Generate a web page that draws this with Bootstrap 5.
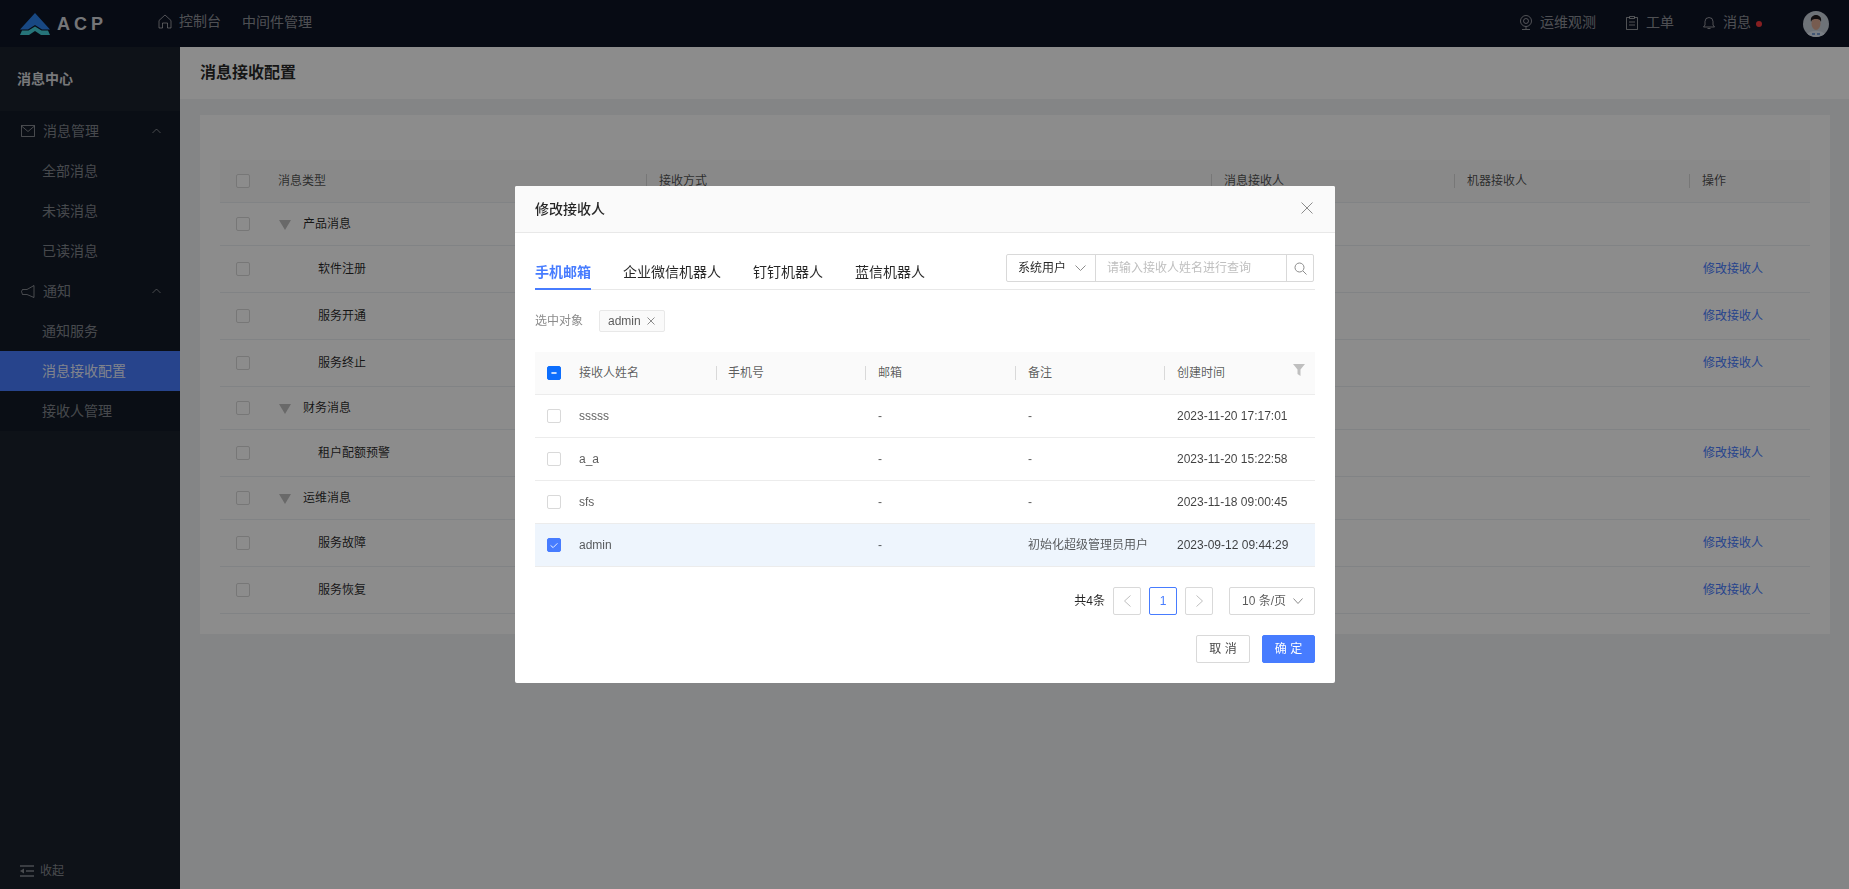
<!DOCTYPE html>
<html lang="en">
<head>
  <meta charset="UTF-8">
  <title>消息接收配置</title>
  <link href="https://cdn.jsdelivr.net/npm/bootstrap@5.3.0/dist/css/bootstrap.min.css" rel="stylesheet">
  <style>
    body {
        font-family: "Liberation Sans", "Noto Sans CJK SC", sans-serif;
        font-size: 12px;
        color: rgba(0, 0, 0, .85);
        background: #f0f2f5;
        height: 889px;
        overflow: hidden;
    }

    .top-bar {
        height: 47px;
        background: #0e1425;
        color: rgba(255, 255, 255, .55);
        font-size: 14px;
        padding: 0 20px;
    }

    .brand-name {
        font-size: 18px;
        font-weight: 700;
        letter-spacing: 4px;
        color: #d4d6da;
        margin-left: 7px;
        line-height: 1;
    }

    .top-links { margin-left: 51px; gap: 21px; margin-bottom: 2px; }
    .top-item { gap: 7px; margin-bottom: 2px; }
    .top-right .top-item { gap: 8px; }
    .top-item svg, .side-head svg { stroke: currentColor; fill: none; }

    .msg-dot {
        width: 6px;
        height: 6px;
        background: #f5393d;
        border-radius: 50%;
        margin-left: 5px;
    }

    .user-pic {
        width: 26px;
        height: 26px;
        border-radius: 50%;
        overflow: hidden;
        margin-left: 41px;
    }

    .side-bar {
        flex: 0 0 180px;
        height: 842px;
        background: #1a212d;
        color: rgba(255, 255, 255, .48);
        font-size: 14px;
    }

    .side-title {
        height: 64px;
        padding-left: 17px;
        color: rgba(255, 255, 255, .85);
        font-weight: 700;
    }

    .side-menu { background: #131a27; }
    .side-row { height: 40px; display: flex; align-items: center; white-space: nowrap; }
    .side-head { padding: 0 19px 0 21px; gap: 8px; }
    .side-sub { padding-left: 42px; }
    .side-sub.is-on { background: #477cff; color: rgba(255, 255, 255, .9); }

    .side-fold {
        height: 40px;
        padding-left: 20px;
        padding-top: 3px;
        gap: 6px;
        font-size: 12px;
    }

    .page-title {
        height: 52px;
        background: #fff;
        padding-left: 20px;
        font-size: 16px;
        font-weight: 700;
    }

    .page-body { padding: 16px 19px 0 20px; }
    .back-card { background: #fff; padding: 45px 20px 20px; }

    .back-table { margin: 0; table-layout: fixed; width: 100%; }
    .table.back-table > * > * > * {
        padding: 0;
        font-weight: 400;
        vertical-align: middle;
        border-bottom: 1px solid #ebeef2;
        background: transparent;
        color: rgba(0, 0, 0, .85);
    }
    .table.back-table thead th { height: 42px; background: #fafafa; position: relative; color: rgba(0, 0, 0, .7); }
    .back-table .group-row td { height: 43px; }
    .back-table .child-row td { height: 47px; }
    .table.back-table .fix-check { padding-left: 16px; }
    .table.back-table th.head-split { padding-left: 13px; }
    .table.back-table td.op-link { color: #477cff; padding-left: 14px; }
    .child-text { padding-left: 40px; }

    .arrow-down {
        display: inline-block;
        width: 0;
        height: 0;
        border-left: 6px solid transparent;
        border-right: 6px solid transparent;
        border-top: 10px solid #bfbfbf;
        margin: 0 12px 0 1px;
        vertical-align: -2px;
    }

    .head-split::before {
        content: "";
        position: absolute;
        left: 0;
        top: 14px;
        height: 14px;
        width: 1px;
        background: #d9d9d9;
    }

    .modal-backdrop.show { opacity: .45; }
    .dialog-wrap { max-width: 820px; margin: 186px auto 0 515px; }
    .dialog-box { border: 0; border-radius: 2px; font-size: 12px; }
    .dialog-head {
        height: 47px;
        padding: 0 20px;
        background: #fafafa;
        border-bottom: 1px solid #e8e8e8;
        border-radius: 2px 2px 0 0;
        font-size: 14px;
        font-weight: 500;
    }
    .dialog-close { margin: 0 2px 2px 0; }
    .dialog-body { padding: 20px; height: 450px; }

    .tab-row { height: 36px; border-bottom: 1px solid #e8e8e8; position: relative; margin-top: 1px; }
    .tab-link {
        font-size: 14px;
        height: 36px;
        line-height: 36px;
        margin-right: 32px;
    }
    .tab-link.is-on { color: #477cff; font-weight: 700; border-bottom: 2px solid #477cff; }

    .search-group {
        position: absolute;
        right: 1px;
        top: 0;
        height: 28px;
        width: 308px;
        border: 1px solid #d9d9d9;
        border-radius: 2px;
    }
    .search-type { width: 89px; padding-left: 11px; gap: 9px; border-right: 1px solid #d9d9d9; }
    .search-text { width: 190px; padding-left: 11px; color: #bfbfbf; }
    .search-btn { flex: 1; border-left: 1px solid #d9d9d9; justify-content: center; }

    .pick-row { height: 22px; margin-top: 20px; margin-bottom: 20px; color: #8c8c8c; }
    .pick-tag {
        margin-left: 16px;
        height: 22px;
        width: 66px;
        padding-left: 8px;
        gap: 6px;
        background: #fafafa;
        border: 1px solid #e8e8e8;
        border-radius: 2px;
        color: rgba(0, 0, 0, .65);
    }

    .user-table { margin: 0; table-layout: fixed; width: 780px; }
    .table.user-table > * > * > * {
        height: 43px;
        padding: 0 0 0 12px;
        vertical-align: middle;
        font-weight: 400;
        border-bottom: 1px solid #ececec;
        color: rgba(0, 0, 0, .65);
        background: transparent;
    }
    .table.user-table > * > tr > :nth-child(n+4) { padding-left: 13px; }
    .table.user-table thead th { height: 42px; background: #fafafa; position: relative; }
    .table.user-table tr.is-picked td { background: #eef5fd; }
    .table.user-table .time-cell { color: rgba(0, 0, 0, .75); }

    .filter-mark { position: absolute; right: 10px; top: 12px; }

    .pick-box {
        width: 14px;
        height: 14px;
        margin: 0;
        display: block;
        border-color: #d9d9d9;
        border-radius: 2px !important;
    }
    .pick-box:checked {
        background-color: #477cff;
        border-color: #477cff;
        background-image: url("data:image/svg+xml,%3csvg xmlns='http://www.w3.org/2000/svg' viewBox='0 0 14 14'%3e%3cpath fill='none' stroke='%23fff' d='M3 7.500l3 2.500 5-5'/%3e%3c/svg%3e");
    }
    .pick-box:indeterminate {
        background-color: #477cff;
        border-color: #477cff;
        background-image: url("data:image/svg+xml,%3csvg xmlns='http://www.w3.org/2000/svg' viewBox='0 0 14 14'%3e%3cpath fill='none' stroke='%23fff' stroke-width='2' d='M4 7h6'/%3e%3c/svg%3e");
    }
    .back-box { border-color: #d9d9d9; }

    .pager-row { margin-top: 20px; height: 28px; gap: 8px; }
    .pager-btn {
        width: 28px;
        height: 28px;
        border: 1px solid #d9d9d9;
        border-radius: 2px;
    }
    .pager-btn.is-on { border-color: #477cff; color: #477cff; }
    .size-pick {
        width: 86px;
        height: 28px;
        margin-left: 8px;
        padding: 0 11px 0 12px;
        border: 1px solid #d9d9d9;
        border-radius: 2px;
        color: rgba(0, 0, 0, .65);
    }

    .foot-row { margin-top: 20px; gap: 12px; }
    .foot-btn {
        width: 54px;
        height: 28px;
        padding: 0;
        font-size: 12px;
        border-radius: 2px;
        border: 1px solid #d9d9d9;
        background: #fff;
        color: rgba(0, 0, 0, .75);
    }
    .foot-btn.is-main { background: #477cff; border-color: #477cff; color: #fff; width: 53px; }
  </style>
</head>
<body>

<header class="top-bar d-flex align-items-center">
  <svg width="30" height="22" viewBox="0 0 30 22">
    <path d="M15 0 30 16.500H22L15 12 8 16.500H0Z" fill="#2c84ee"/>
    <path d="M15 14 20 17.500H10Z" fill="#2c84ee"/>
    <path d="M2 17.500H8.500L15 13.500 21.500 17.500H28L30 22H21L15 18 9 22H0Z" fill="#45d4dc"/>
  </svg>
  <span class="brand-name">ACP</span>
  <div class="top-links d-flex align-items-center">
    <span class="top-item d-flex align-items-center">
      <svg width="14" height="15" viewBox="0 0 14 15"><path d="M1 6.500 7 1l6 5.500V14H9.500V9h-5v5H1Z"/></svg>
      控制台
    </span>
    <span>中间件管理</span>
  </div>
  <div class="top-right ms-auto d-flex align-items-center">
    <span class="top-item d-flex align-items-center">
      <svg width="12" height="15" viewBox="0 0 12 15"><circle cx="6" cy="6" r="5.500"/><circle cx="6" cy="6" r="2.500"/><path d="M6 11.500V14M2 14.500h8"/></svg>
      运维观测
    </span>
    <span class="top-item d-flex align-items-center" style="margin-left:30px">
      <svg width="12" height="14" viewBox="0 0 12 14"><path d="M3.500 1.500H.5v12h11v-12h-3M3.500.5h5v2h-5ZM3 6h6M3 9h6"/></svg>
      工单
    </span>
    <span class="top-item d-flex align-items-center" style="margin-left:29px">
      <svg width="12" height="14" viewBox="0 0 12 14"><path d="M6 1.500a4 4 0 0 0-4 4V9L.5 11h11L10 9V5.500a4 4 0 0 0-4-4ZM4.500 12.500h3"/></svg>
      消息
    </span>
    <span class="msg-dot"></span>
    <span class="user-pic d-block">
      <svg width="26" height="26" viewBox="0 0 26 26">
        <rect width="26" height="26" fill="#c9d1da"/>
        <path d="M3 26c1-5 5-6 10-6s9 1 10 6Z" fill="#dfe8f2"/>
        <ellipse cx="13" cy="12.500" rx="4.500" ry="6.500" fill="#d9a893"/>
        <path d="M8 11c-1-5 2-7 5-7s6 2 5 7c-1-3-3-3-5-3s-4 0-5 3Z" fill="#1f1b1c"/>
        <path d="M9 23h3M14 23h3" stroke="#5b86c9" stroke-width="1.500"/>
      </svg>
    </span>
  </div>
</header>

<div class="d-flex">
  <aside class="side-bar d-flex flex-column">
    <div class="side-title d-flex align-items-center">消息中心</div>
    <div class="side-menu">
      <div class="side-row side-head">
        <svg width="14" height="12" viewBox="0 0 14 12"><path d="M.5.500h13v11H.5ZM.5 1 7 6.500 13.500 1"/></svg>
        <span class="flex-grow-1">消息管理</span>
        <svg width="9" height="6" viewBox="0 0 9 6"><path d="M.5 5 4.500 1l4 4"/></svg>
      </div>
      <div class="side-row side-sub">全部消息</div>
      <div class="side-row side-sub">未读消息</div>
      <div class="side-row side-sub">已读消息</div>
      <div class="side-row side-head">
        <svg width="14" height="13" viewBox="0 0 14 13"><path d="M13 .5v12L6 9.500H1.500L.5 6.500l1-2H6Z"/></svg>
        <span class="flex-grow-1">通知</span>
        <svg width="9" height="6" viewBox="0 0 9 6"><path d="M.5 5 4.500 1l4 4"/></svg>
      </div>
      <div class="side-row side-sub">通知服务</div>
      <div class="side-row side-sub is-on">消息接收配置</div>
      <div class="side-row side-sub">接收人管理</div>
    </div>
    <div class="side-fold d-flex align-items-center mt-auto side-head">
      <svg width="14" height="12" viewBox="0 0 14 12"><path d="M0 1h14M6 6h8M0 11h14" stroke-width="1.500"/><path d="M0 6l4-2.500v5Z" fill="currentColor" stroke="none"/></svg>
      收起
    </div>
  </aside>

  <main class="flex-grow-1">
    <div class="page-title d-flex align-items-center">消息接收配置</div>
    <div class="page-body">
      <div class="back-card">
        <table class="table back-table">
          <colgroup>
            <col style="width:58px"><col style="width:368px"><col style="width:565px"><col style="width:243px"><col style="width:235px"><col>
          </colgroup>
          <thead>
            <tr>
              <th class="fix-check"><input type="checkbox" class="form-check-input pick-box back-box"></th>
              <th>消息类型</th>
              <th class="head-split">接收方式</th>
              <th class="head-split">消息接收人</th>
              <th class="head-split">机器接收人</th>
              <th class="head-split">操作</th>
            </tr>
          </thead>
          <tbody id="backRows"></tbody>
        </table>
      </div>
    </div>
  </main>
</div>

<div class="modal-backdrop show"></div>
<div class="modal d-block">
  <div class="modal-dialog dialog-wrap">
    <div class="modal-content dialog-box">
      <div class="dialog-head d-flex align-items-center justify-content-between">
        修改接收人
        <svg width="12" height="12" viewBox="0 0 12 12" class="dialog-close"><path d="M.5.500l11 11M11.500.500l-11 11" stroke="#8c8c8c" fill="none"/></svg>
      </div>
      <div class="dialog-body">
        <div class="tab-row d-flex">
          <span class="tab-link is-on">手机邮箱</span>
          <span class="tab-link">企业微信机器人</span>
          <span class="tab-link">钉钉机器人</span>
          <span class="tab-link">蓝信机器人</span>
          <div class="search-group d-flex">
            <div class="search-type d-flex align-items-center">
              系统用户
              <svg width="11" height="6" viewBox="0 0 11 6"><path d="M.5.500l5 5 5-5" stroke="#8c8c8c" fill="none"/></svg>
            </div>
            <div class="search-text d-flex align-items-center">请输入接收人姓名进行查询</div>
            <div class="search-btn d-flex align-items-center">
              <svg width="13" height="13" viewBox="0 0 13 13"><circle cx="5.500" cy="5.500" r="4.500" stroke="#8c8c8c" fill="none"/><path d="M9 9l3.500 3.500" stroke="#8c8c8c"/></svg>
            </div>
          </div>
        </div>

        <div class="pick-row d-flex align-items-center">
          选中对象
          <span class="pick-tag d-flex align-items-center">
            admin
            <svg width="8" height="8" viewBox="0 0 8 8"><path d="M.5.500l7 7M7.500.500l-7 7" stroke="#8c8c8c" fill="none"/></svg>
          </span>
        </div>

        <table class="table user-table">
          <colgroup>
            <col style="width:32px"><col style="width:149px"><col style="width:149px"><col style="width:150px"><col style="width:149px"><col>
          </colgroup>
          <thead>
            <tr>
              <th><input type="checkbox" id="allBox" class="form-check-input pick-box"></th>
              <th>接收人姓名</th>
              <th class="head-split">手机号</th>
              <th class="head-split">邮箱</th>
              <th class="head-split">备注</th>
              <th class="head-split">创建时间
                <svg class="filter-mark" width="12" height="12" viewBox="0 0 12 12"><path d="M0 0h12L7.500 5.500V12l-3-2V5.500Z" fill="#bfbfbf"/></svg>
              </th>
            </tr>
          </thead>
          <tbody id="userRows"></tbody>
        </table>

        <div class="pager-row d-flex align-items-center justify-content-end">
          <span>共4条</span>
          <span class="pager-btn d-flex align-items-center justify-content-center">
            <svg width="7" height="12" viewBox="0 0 7 12"><path d="M6.500.500l-6 5.500 6 5.500" stroke="#bfbfbf" fill="none"/></svg>
          </span>
          <span class="pager-btn is-on d-flex align-items-center justify-content-center">1</span>
          <span class="pager-btn d-flex align-items-center justify-content-center">
            <svg width="7" height="12" viewBox="0 0 7 12"><path d="M.5.500l6 5.500-6 5.500" stroke="#bfbfbf" fill="none"/></svg>
          </span>
          <span class="size-pick d-flex align-items-center justify-content-between">
            10 条/页
            <svg width="10" height="6" viewBox="0 0 10 6"><path d="M.5.500 5 5.500l4.500-5" stroke="#8c8c8c" fill="none"/></svg>
          </span>
        </div>

        <div class="foot-row d-flex justify-content-end">
          <button class="btn foot-btn">取 消</button>
          <button class="btn foot-btn is-main">确 定</button>
        </div>
      </div>
    </div>
  </div>
</div>

<script src="https://cdn.jsdelivr.net/npm/bootstrap@5.3.0/dist/js/bootstrap.bundle.min.js"></script>
<script>
  const backRows = [
      { name: '产品消息', group: true },
      { name: '软件注册' },
      { name: '服务开通' },
      { name: '服务终止' },
      { name: '财务消息', group: true },
      { name: '租户配额预警' },
      { name: '运维消息', group: true },
      { name: '服务故障' },
      { name: '服务恢复' }
  ];

  const users = [
      { name: 'sssss', note: '-', time: '2023-11-20 17:17:01' },
      { name: 'a_a', note: '-', time: '2023-11-20 15:22:58' },
      { name: 'sfs', note: '-', time: '2023-11-18 09:00:45' },
      { name: 'admin', note: '初始化超级管理员用户', time: '2023-09-12 09:44:29', picked: true }
  ];

  document.getElementById('backRows').innerHTML = backRows.map(row => `
      <tr class="${row.group ? 'group-row' : 'child-row'}">
          <td class="fix-check"><input type="checkbox" class="form-check-input pick-box back-box"></td>
          <td>${row.group ? `<i class="arrow-down"></i>${row.name}` : `<span class="child-text">${row.name}</span>`}</td>
          <td></td>
          <td></td>
          <td></td>
          <td class="op-link">${row.group ? '' : '修改接收人'}</td>
      </tr>
  `).join('');

  document.getElementById('userRows').innerHTML = users.map(user => `
      <tr class="${user.picked ? 'is-picked' : ''}">
          <td><input type="checkbox" class="form-check-input pick-box" ${user.picked ? 'checked' : ''}></td>
          <td>${user.name}</td>
          <td></td>
          <td>-</td>
          <td>${user.note}</td>
          <td class="time-cell">${user.time}</td>
      </tr>
  `).join('');

  document.getElementById('allBox').indeterminate = true;
</script>
</body>
</html>
